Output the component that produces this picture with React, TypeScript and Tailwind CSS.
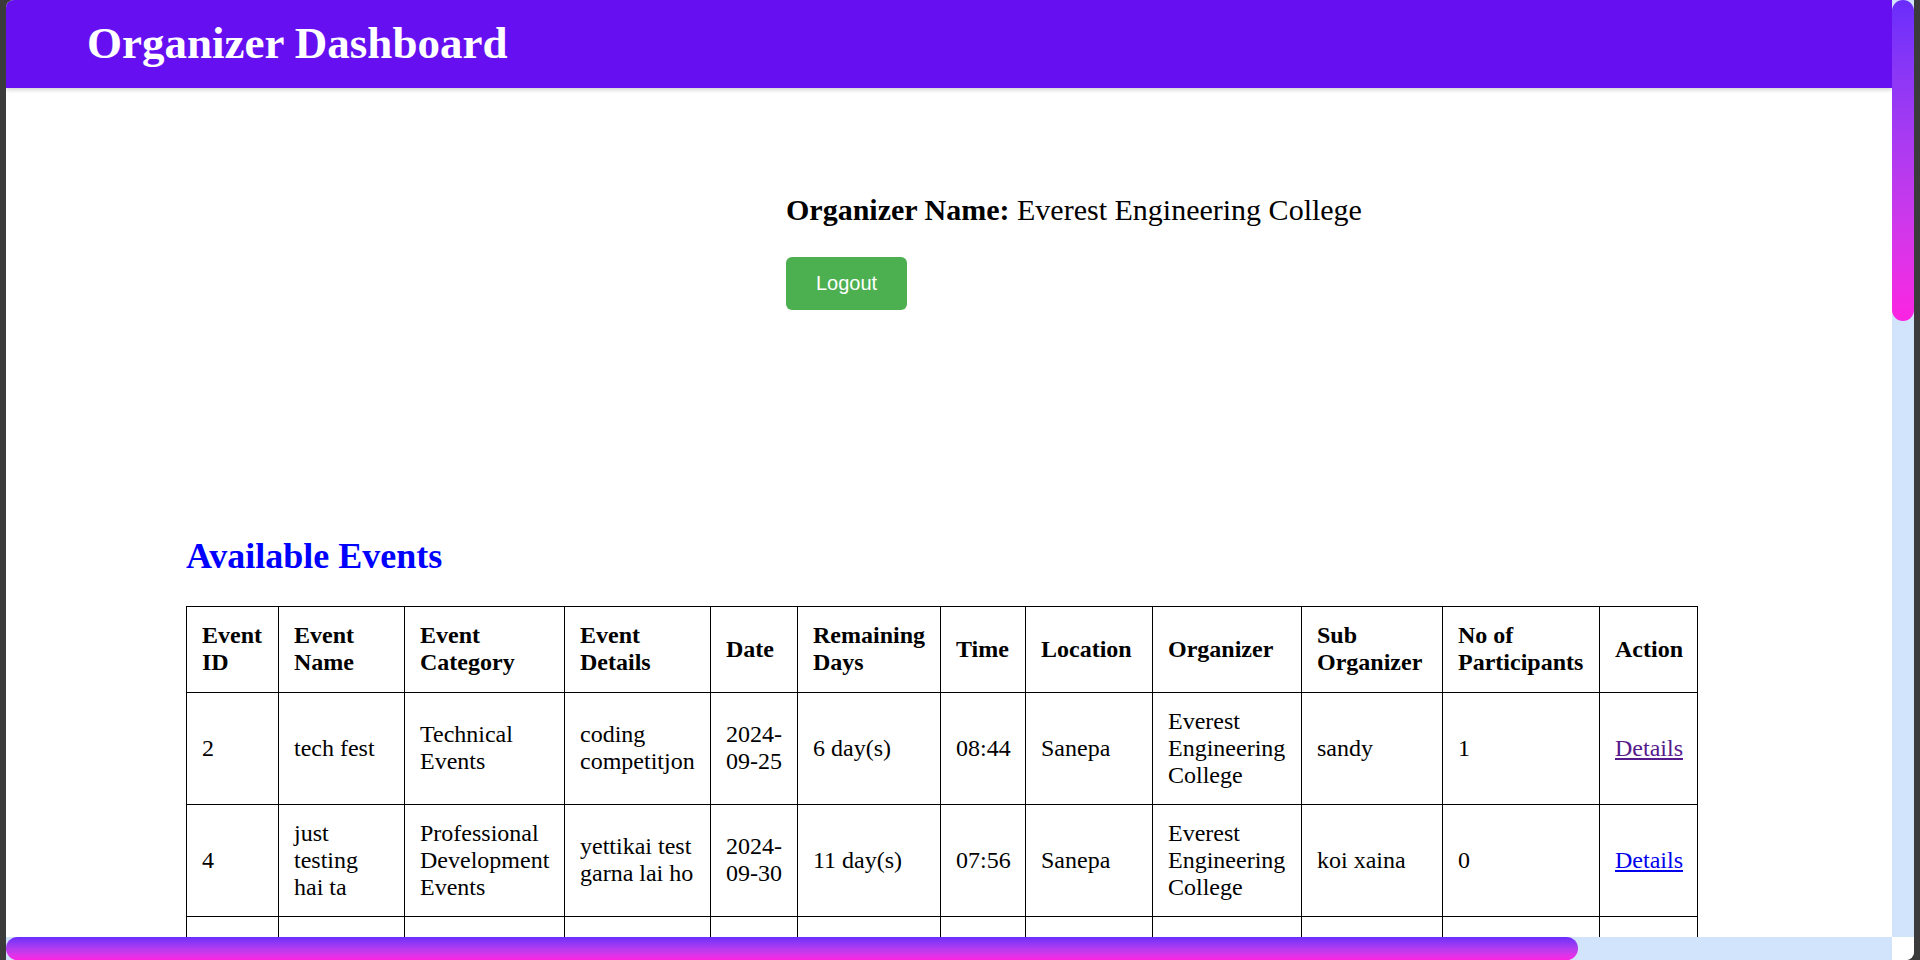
import React from 'react';

type EventRow = {
  id: string;
  name: string;
  category: string;
  details: string;
  date: string;
  remaining: string;
  time: string;
  location: string;
  organizer: string;
  sub: string;
  participants: string;
  visited: boolean;
};

const events: EventRow[] = [
  {
    id: '2',
    name: 'tech fest',
    category: 'Technical Events',
    details: 'coding competitjon',
    date: '2024-09-25',
    remaining: '6 day(s)',
    time: '08:44',
    location: 'Sanepa',
    organizer: 'Everest Engineering College',
    sub: 'sandy',
    participants: '1',
    visited: true,
  },
  {
    id: '4',
    name: 'just testing hai ta',
    category: 'Professional Development Events',
    details: 'yettikai test garna lai ho',
    date: '2024-09-30',
    remaining: '11 day(s)',
    time: '07:56',
    location: 'Sanepa',
    organizer: 'Everest Engineering College',
    sub: 'koi xaina',
    participants: '0',
    visited: false,
  },
  {
    id: '5',
    name: 'hackathon',
    category: 'Technical Events',
    details: 'hello this is a long test event for the whole college',
    date: '2024-10-05',
    remaining: '16 day(s)',
    time: '10:00',
    location: 'Sanepa',
    organizer: 'Everest Engineering College',
    sub: 'sandy',
    participants: '0',
    visited: false,
  },
];

const headers = [
  { label: 'Event ID', w: 'w-[92px]' },
  { label: 'Event Name', w: 'w-[126px]' },
  { label: 'Event Category', w: 'w-[160px]' },
  { label: 'Event Details', w: 'w-[146px]' },
  { label: 'Date', w: 'w-[87px]' },
  { label: 'Remaining Days', w: 'w-[143px]' },
  { label: 'Time', w: 'w-[85px]' },
  { label: 'Location', w: 'w-[127px]' },
  { label: 'Organizer', w: 'w-[149px]' },
  { label: 'Sub Organizer', w: 'w-[141px]' },
  { label: 'No of Participants', w: 'w-[157px]' },
  { label: 'Action', w: 'w-[98px]' },
];

const td = 'border border-black px-[15px] py-[15px] align-middle';

const App = () => {
  return (
    <div className="h-screen w-full overflow-hidden bg-[#3b3b3b] pl-[6px] pr-[6px]">
      <div className="flex h-[960px] w-[1908px] flex-col overflow-hidden rounded-tl-[8px] rounded-br-[8px] bg-white font-['Liberation_Serif',serif] text-black">
        <div className="flex min-h-0 flex-1">
          {/* Page */}
          <div className="min-w-0 flex-1 overflow-hidden">
            <header className="relative z-10 flex h-[88px] items-center bg-[#6610f2] px-[81px] shadow-[0_2px_4px_rgba(0,0,0,0.18)]">
              <h1 className="text-[45px] leading-[1.15] font-bold text-white">Organizer Dashboard</h1>
            </header>

            {/* Profile */}
            <section className="pt-[105px] pl-[780px]">
              <p className="text-[30px] leading-[1.15]">
                <span className="font-bold">Organizer Name:</span> Everest Engineering College
              </p>
              <button className="mt-[29px] h-[53px] w-[121px] rounded-[6px] bg-[#4caf50] font-['Liberation_Sans',Arial,sans-serif] text-[20px] text-white">
                Logout
              </button>
            </section>

            {/* Events */}
            <section className="pt-[226px] pl-[180px]">
              <h2 className="text-[36px] leading-[1.15] font-bold text-[#0000ff]">Available Events</h2>
              <table className="mt-[29px] w-[1511px] table-fixed border-collapse border border-black text-[24px] leading-[27px]">
                <thead>
                  <tr>
                    {headers.map((h) => (
                      <th key={h.label} className={`${h.w} border border-black px-[15px] py-[15.5px] text-left align-middle font-bold`}>
                        {h.label}
                      </th>
                    ))}
                  </tr>
                </thead>
                <tbody>
                  {events.map((e) => (
                    <tr key={e.id}>
                      <td className={td}>{e.id}</td>
                      <td className={td}>{e.name}</td>
                      <td className={td}>{e.category}</td>
                      <td className={td}>{e.details}</td>
                      <td className={td}>{e.date}</td>
                      <td className={td}>{e.remaining}</td>
                      <td className={td}>{e.time}</td>
                      <td className={td}>{e.location}</td>
                      <td className={td}>{e.organizer}</td>
                      <td className={td}>{e.sub}</td>
                      <td className={td}>{e.participants}</td>
                      <td className={td}>
                        <a href="#" className={e.visited ? 'text-[#551a8b] underline' : 'text-[#0000ee] underline'}>
                          Details
                        </a>
                      </td>
                    </tr>
                  ))}
                </tbody>
              </table>
            </section>
          </div>

          {/* Vertical scrollbar */}
          <div className="w-[22px] shrink-0 bg-[#d1e4fc]">
            <div className="h-[321px] w-full rounded-full bg-gradient-to-b from-[#6a2cfb] to-[#fc22e2]" />
          </div>
        </div>

        {/* Horizontal scrollbar */}
        <div className="flex h-[23px] shrink-0">
          <div className="flex-1 bg-[#d1e4fc]">
            <div className="h-full w-[1572px] rounded-full bg-gradient-to-b from-[#6a2cfb] to-[#fc22e2]" />
          </div>
          <div className="w-[22px] rounded-br-[8px] bg-white" />
        </div>
      </div>
    </div>
  );
};

export default App;
